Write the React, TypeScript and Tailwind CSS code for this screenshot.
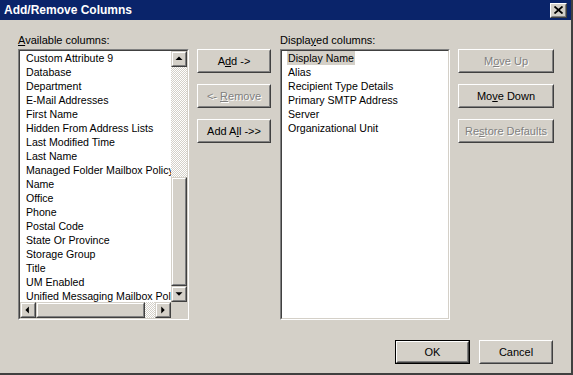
import React from "react";

const font = { fontFamily: '"Liberation Sans", Arial, sans-serif' };

function Raised({ children, className = "", isDefault = false, disabled = false }: { children: React.ReactNode; className?: string; isDefault?: boolean; disabled?: boolean }) {
  const inner = (
    <div className="flex h-full w-full border border-t-white border-l-white border-b-[#404040] border-r-[#404040]">
      <div className={`flex h-full w-full items-center justify-center border border-t-[#d4d0c8] border-l-[#d4d0c8] border-b-[#808080] border-r-[#808080] text-[11px] ${disabled ? "text-[#808080] [text-shadow:1px_1px_0_#ffffff]" : "text-black"}`}>
        <span className="whitespace-pre">{children}</span>
      </div>
    </div>
  );
  return (
    <div className={`flex ${className}`}>
      {isDefault ? <div className="flex h-full w-full border border-black">{inner}</div> : inner}
    </div>
  );
}

function Sunken({ children, className = "" }: { children: React.ReactNode; className?: string }) {
  return (
    <div className={`flex border border-t-[#808080] border-l-[#808080] border-b-white border-r-white ${className}`}>
      <div className="flex min-w-0 flex-1 border border-t-[#404040] border-l-[#404040] border-b-[#d4d0c8] border-r-[#d4d0c8] bg-white">
        {children}
      </div>
    </div>
  );
}

function ArrowBtn({ dir }: { dir: "up" | "down" | "left" | "right" }) {
  const pts = {
    up: "4,9 8,5 12,9",
    down: "4,6 8,10 12,6",
    left: "9,4 5,8 9,12",
    right: "6,4 10,8 6,12",
  }[dir];
  return (
    <div className="flex h-4 w-4 shrink-0 border border-t-[#d4d0c8] border-l-[#d4d0c8] border-b-[#404040] border-r-[#404040] bg-[#d4d0c8]">
      <div className="relative h-full w-full border border-t-white border-l-white border-b-[#808080] border-r-[#808080]">
        <svg width="14" height="14" viewBox="0 0 16 16" className="absolute -left-px -top-px">
          <polygon points={pts} fill="#000" />
        </svg>
      </div>
    </div>
  );
}

function Thumb({ className = "" }: { className?: string }) {
  return (
    <div className={`flex border border-t-[#d4d0c8] border-l-[#d4d0c8] border-b-[#404040] border-r-[#404040] bg-[#d4d0c8] ${className}`}>
      <div className="h-full w-full border border-t-white border-l-white border-b-[#808080] border-r-[#808080]" />
    </div>
  );
}

const track = "bg-[repeating-conic-gradient(#d4d0c8_0_25%,#ffffff_0_50%)] bg-[length:2px_2px]";

const available = [
  "Custom Attribute 9",
  "Database",
  "Department",
  "E-Mail Addresses",
  "First Name",
  "Hidden From Address Lists",
  "Last Modified Time",
  "Last Name",
  "Managed Folder Mailbox Policy",
  "Name",
  "Office",
  "Phone",
  "Postal Code",
  "State Or Province",
  "Storage Group",
  "Title",
  "UM Enabled",
  "Unified Messaging Mailbox Policy",
];

const displayed = ["Display Name", "Alias", "Recipient Type Details", "Primary SMTP Address", "Server", "Organizational Unit"];

export default function App() {
  return (
    <div className="h-[375px] w-[573px] overflow-hidden bg-white" style={font}>
      <div className="flex h-[375px] w-[573px] flex-col border-r-2 border-b-2 border-r-[#404040] border-b-[#404040] bg-[#d4d0c8]">
        {/* title bar */}
        <div className="flex h-[20px] shrink-0 items-center justify-between bg-[#0a246a] pl-[4px] pr-[4px]">
          <span className="text-[12px] font-bold leading-none text-white">Add/Remove Columns</span>
          <div className="flex h-[15px] w-[17px] border border-t-white border-l-white border-b-[#404040] border-r-[#404040] bg-[#d4d0c8]">
            <div className="flex h-full w-full items-center justify-center border border-b-[#808080] border-r-[#808080] border-t-[#d4d0c8] border-l-[#d4d0c8]">
              <svg width="9" height="8" viewBox="0 0 9 8">
                <path d="M0.5 0.5 L8.5 7.5 M8.5 0.5 L0.5 7.5" stroke="#000" strokeWidth="1.8" />
              </svg>
            </div>
          </div>
        </div>

        <div className="flex flex-1 flex-col pl-[18px] pr-[17px]">
          <div className="mt-[13px] flex">
            {/* available */}
            <div className="flex w-[171px] flex-col">
              <div className="h-[16px] text-[11px] leading-[14px] text-black">
                <span className="underline">A</span>vailable columns:
              </div>
              <Sunken className="h-[271px]">
                <div className="flex min-w-0 flex-1 flex-col">
                  <div className="flex min-h-0 flex-1">
                    <div className="min-w-0 flex-1 overflow-hidden pl-[6px]">
                      {available.map((t) => (
                        <div key={t} className="h-[14px] whitespace-nowrap text-[10.6px] leading-[14px] text-black">
                          {t}
                        </div>
                      ))}
                    </div>
                    <div className="flex w-4 shrink-0 flex-col">
                      <ArrowBtn dir="up" />
                      <div className={`h-[110px] ${track}`} />
                      <Thumb className="flex-1" />
                      <ArrowBtn dir="down" />
                    </div>
                  </div>
                  <div className="flex h-4 shrink-0">
                    <ArrowBtn dir="left" />
                    <Thumb className="w-[109px]" />
                    <div className={`flex-1 ${track}`} />
                    <ArrowBtn dir="right" />
                    <div className="w-4 bg-[#d4d0c8]" />
                  </div>
                </div>
              </Sunken>
            </div>

            {/* middle buttons */}
            <div className="ml-[8px] mt-[16px] flex w-[74px] flex-col gap-[11px]">
              <Raised className="h-[24px]">
                A<span className="underline">d</span>d -&gt;
              </Raised>
              <Raised className="h-[24px]" disabled>
                &lt;- <span className="underline">R</span>emove
              </Raised>
              <Raised className="h-[24px]">
                Add A<span className="underline">l</span>l -&gt;&gt;
              </Raised>
            </div>

            {/* displayed */}
            <div className="ml-[9px] flex w-[170px] flex-col">
              <div className="h-[16px] text-[11px] leading-[14px] text-black">
                Displa<span className="underline">y</span>ed columns:
              </div>
              <Sunken className="h-[271px]">
                <div className="flex flex-col pl-[5px]">
                  {displayed.map((t, i) => (
                    <div key={t} className="flex h-[14px]">
                      <span className={`whitespace-nowrap px-[1px] text-[10.6px] leading-[14px] text-black ${i === 0 ? "bg-[#d4d0c8]" : ""}`}>{t}</span>
                    </div>
                  ))}
                </div>
              </Sunken>
            </div>

            {/* right buttons */}
            <div className="ml-[8px] mt-[16px] flex w-[96px] flex-col gap-[11px]">
              <Raised className="h-[24px]" disabled>
                M<span className="underline">o</span>ve Up
              </Raised>
              <Raised className="h-[24px]">
                Mo<span className="underline">v</span>e Down
              </Raised>
              <Raised className="h-[24px]" disabled>
                Re<span className="underline">s</span>tore Defaults
              </Raised>
            </div>
          </div>

          <div className="mt-[20px] flex justify-end gap-[9px] pr-[1px]">
            <Raised className="h-[24px] w-[75px]" isDefault>
              OK
            </Raised>
            <Raised className="h-[24px] w-[74px]">Cancel</Raised>
          </div>
        </div>
      </div>
    </div>
  );
}
